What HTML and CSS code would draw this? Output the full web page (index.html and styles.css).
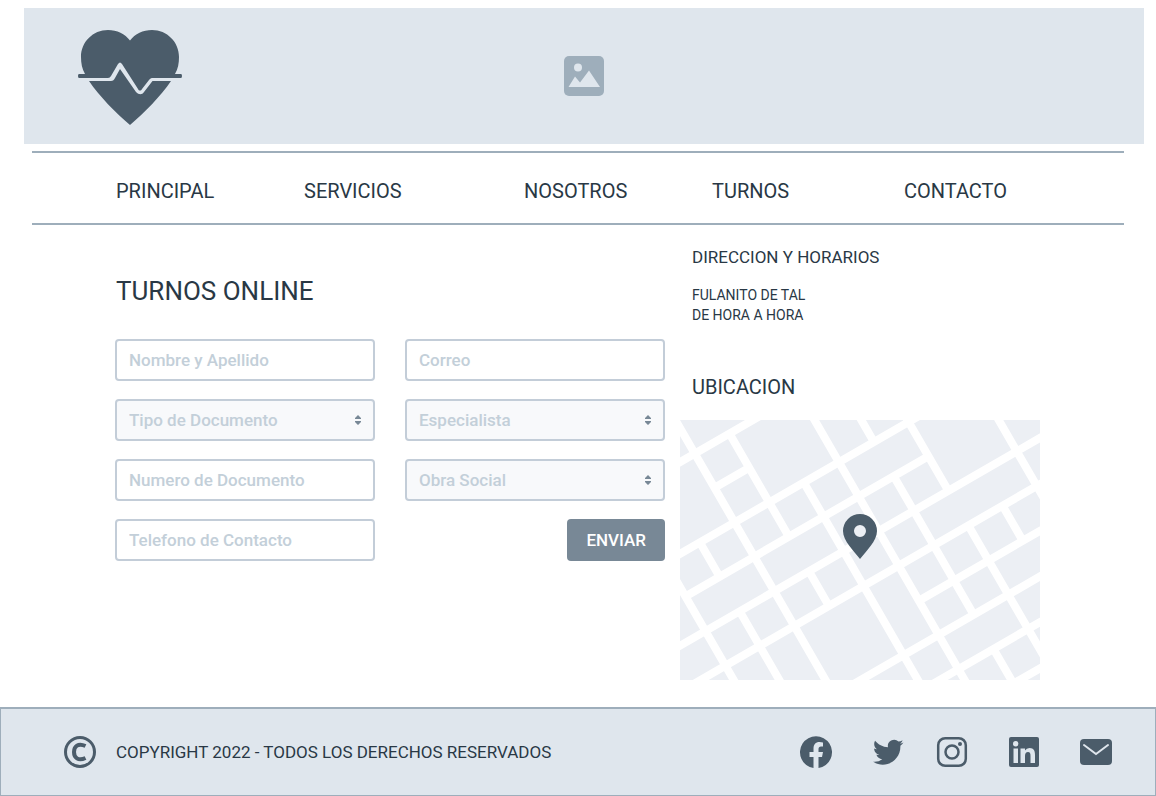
FILE: index.html
```html
<!DOCTYPE html>
<html lang="es">
<head>
<meta charset="utf-8">
<meta name="viewport" content="width=device-width, initial-scale=1">
<title>Turnos Online</title>
<link rel="stylesheet" href="styles.css">
</head>
<body>
<header class="banner">
  <svg class="logo" viewBox="0 0 106 98" aria-hidden="true">
    <path fill="currentColor" d="M53 98C39 86 22 69 12 54H34C36 54 37 53 38 51L43 42L59 65C62 68 65 68 67 65L75.500 54H94C84 69 67 86 53 98Z"/>
    <path fill="currentColor" d="M2 47H8C5 42 4 36 4 30C4 15 16 3 31 3C40 3 48 7 53 13.500C58 7 66 3 75 3C90 3 102 15 102 30C102 36 101 42 98 47H104Q105 47 105 49Q105 51 104 51H75C73.500 51 73 52 72 53L65 62C64 64 62 64 61 62L45 37C43.500 35 42.500 35 41 37L34 49Q33 51 31 51H2Q1 51 1 49Q1 47 2 47Z"/>
  </svg>
  <svg class="picture" viewBox="0 0 40 40" aria-hidden="true">
    <rect width="40" height="40" rx="5" fill="currentColor"/>
    <circle cx="14" cy="11.500" r="4" fill="#dfe6ed"/>
    <path d="M4.500 31L11 20.500L16 26.500L25 14.500L36 31Z" fill="#dfe6ed"/>
  </svg>
</header>
<nav class="menu">
  <a href="#principal">PRINCIPAL</a>
  <a href="#servicios">SERVICIOS</a>
  <a href="#nosotros">NOSOTROS</a>
  <a href="#turnos">TURNOS</a>
  <a href="#contacto">CONTACTO</a>
</nav>
<main class="content">
  <section class="booking">
    <h1>TURNOS ONLINE</h1>
    <form class="form">
      <input class="field" type="text" aria-label="Nombre y Apellido" placeholder="Nombre y Apellido">
      <input class="field" type="email" aria-label="Correo" placeholder="Correo">
      <div class="picker">
        <select class="field" aria-label="Tipo de Documento"><option>Tipo de Documento</option></select>
        <svg class="arrows" viewBox="0 0 6 10" aria-hidden="true"><path d="M0 4V3L3 0L6 3V4ZM0 6V7L3 10L6 7V6Z"/></svg>
      </div>
      <div class="picker">
        <select class="field" aria-label="Especialista"><option>Especialista</option></select>
        <svg class="arrows" viewBox="0 0 6 10" aria-hidden="true"><path d="M0 4V3L3 0L6 3V4ZM0 6V7L3 10L6 7V6Z"/></svg>
      </div>
      <input class="field" type="text" aria-label="Numero de Documento" placeholder="Numero de Documento">
      <div class="picker">
        <select class="field" aria-label="Obra Social"><option>Obra Social</option></select>
        <svg class="arrows" viewBox="0 0 6 10" aria-hidden="true"><path d="M0 4V3L3 0L6 3V4ZM0 6V7L3 10L6 7V6Z"/></svg>
      </div>
      <input class="field" type="tel" aria-label="Telefono de Contacto" placeholder="Telefono de Contacto">
      <button class="send" type="submit">ENVIAR</button>
    </form>
  </section>
  <aside class="info">
    <h2 class="hours-title">DIRECCION Y HORARIOS</h2>
    <p class="hours">FULANITO DE TAL<br>DE HORA A HORA</p>
    <h2 class="place-title">UBICACION</h2>
    <svg class="map" viewBox="0 0 360 260" role="img" aria-label="Mapa">
      <rect width="360" height="260" fill="#eceff4"/>
      <g transform="rotate(-30)" fill="none" stroke="#fff" stroke-width="8">
        <path d="M-140 36.500H340M-140 116H340M-83.500 155.500H197M-140 195.500H340M-140 235.500H340M116.500 276H340M-140 315.500H340M-140 355H340M-140 395H340M-4 76H36"/>
        <path d="M-83.500 0V420M-44 116V155.500M-44 195.500V420M-4 0V420M36 36.500V155.500M36 195.500V235.500M76 116V420M116.500 0V420M157 0V116M157 155.500V315.500M157 355V420M197 0V195.500M197 235.500V420M236.500 235.500V276M276 0V420"/>
      </g>
      <path fill="#4b5c6a" fill-rule="evenodd" d="M180 139C174 131 163 121 163 111A17 17 0 0 1 197 111C197 121 186 131 180 139ZM180 105A6 6 0 1 0 180 117A6 6 0 1 0 180 105Z"/>
    </svg>
  </aside>
</main>
<footer class="footer">
  <svg class="icon" viewBox="0 0 32 32" aria-hidden="true">
    <circle cx="16" cy="16" r="14.500" fill="none" stroke="currentColor" stroke-width="3"/>
    <path d="M21.500 10C14 6.500 10 10.500 10 16S14 25.500 21.500 22" fill="none" stroke="currentColor" stroke-width="4"/>
  </svg>
  <p class="copyright">COPYRIGHT 2022 - TODOS LOS DERECHOS RESERVADOS</p>
  <div class="social">
    <a href="#facebook" aria-label="Facebook"><svg class="icon" viewBox="0 0 32 32"><path fill="currentColor" d="M13.500 32A16 16 0 1 1 18.500 32V21H22L23 16H18.500V13Q18.500 10.500 21 10.500H23V6.500Q21.500 6 19.500 6C15.500 6 13.500 8.500 13.500 12.500V16H9.500V21H13.500Z"/></svg></a>
    <a href="#twitter" aria-label="Twitter"><svg class="icon" viewBox="0 0 24 24"><path fill="currentColor" d="M23.600 4.900c-.8.400-1.700.6-2.700.8 1-.6 1.700-1.500 2-2.600-.9.500-1.900.9-3 1.100A4.700 4.700 0 0 0 12 8.500C8.100 8.300 4.600 6.400 2.300 3.600c-1.300 2.100-.6 4.900 1.400 6.300-.8 0-1.500-.2-2.100-.6 0 2.300 1.600 4.200 3.800 4.700-.7.200-1.400.2-2.100.1.600 1.900 2.300 3.200 4.400 3.300A9.500 9.500 0 0 1 .8 19.300c8.900 5.700 20.500-.4 20.500-11.400v-.6c.9-.6 1.700-1.500 2.300-2.400Z"/></svg></a>
    <a href="#instagram" aria-label="Instagram"><svg class="icon" viewBox="0 0 32 32"><rect x="2.200" y="2.200" width="27.600" height="27.600" rx="7" fill="none" stroke="currentColor" stroke-width="2.500"/><circle cx="16" cy="16" r="6.500" fill="none" stroke="currentColor" stroke-width="2.500"/><circle cx="24" cy="8" r="2" fill="currentColor"/></svg></a>
    <a href="#linkedin" aria-label="LinkedIn"><svg class="icon" viewBox="0 0 32 32"><rect x="1" y="1" width="30" height="30" rx="2" fill="currentColor"/><circle cx="7.700" cy="7.700" r="2.700" fill="#dfe6ed"/><path fill="#dfe6ed" d="M5.500 12.500H10V27H5.500ZM12.500 12.500H17V14.500Q18.500 12 21.500 12C26 12 27 15 27 19V27H22.500V20C22.500 17.500 22 16 20 16S17 17.500 17 20V27H12.500Z"/></svg></a>
    <a href="#correo" aria-label="Correo"><svg class="icon" viewBox="0 0 32 32"><rect y="3" width="32" height="26" rx="4" fill="currentColor"/><path d="M4 9L16 18L28 9" fill="none" stroke="#dfe6ed" stroke-width="2" stroke-linecap="round"/></svg></a>
  </div>
</footer>
</body>
</html>
```
FILE: styles.css
```css
* {
  box-sizing: border-box;
}

body {
  display: flex;
  flex-direction: column;
  min-height: 100vh;
  margin: 0;
  background: #fff;
  color: #293845;
  font-family: Roboto, "Liberation Sans", sans-serif;
}

h1,
h2,
p {
  margin: 0;
  font-weight: 400;
}

svg {
  display: block;
}

.banner {
  display: grid;
  grid-template-columns: 1fr auto 1fr;
  align-items: center;
  margin: 8px 12px 0 24px;
  padding: 19px 54px 19px 53px;
  background: #dfe6ed;
}

.logo {
  width: 106px;
  height: 98px;
  color: #4b5c6a;
}

.picture {
  width: 40px;
  height: 40px;
  color: #9eaebb;
}

.menu {
  display: grid;
  grid-template-columns: 188fr 220fr 188fr 192fr 220fr;
  margin: 7px 32px 0;
  padding: 24px 0 18px 84px;
  border-top: 2px solid #9eaebb;
  border-bottom: 2px solid #9eaebb;
  font-size: 20px;
  line-height: 28px;
}

.menu a {
  justify-self: start;
  color: inherit;
  text-decoration: none;
}

.content {
  display: grid;
  grid-template-columns: 550fr 360fr;
  flex: 1;
  gap: 15px;
  align-items: start;
  padding: 18px 116px 27px 115px;
}

.booking {
  padding-top: 28px;
}

.booking h1 {
  padding-left: 1px;
  font-size: 26px;
  line-height: 40px;
}

.form {
  display: grid;
  grid-template-columns: 1fr 1fr;
  gap: 18px 30px;
  margin-top: 28px;
}

.field {
  width: 100%;
  height: 42px;
  padding: 0 12px;
  border: 2px solid #c3cdd8;
  border-radius: 4px;
  background: #fff;
  color: #c3cfd9;
  font: 500 17px Roboto, "Liberation Sans", sans-serif;
}

.field::placeholder {
  color: #c3cfd9;
  opacity: 1;
}

.picker {
  position: relative;
}

.picker .field {
  appearance: none;
  background: #f8f9fb;
}

.arrows {
  position: absolute;
  top: 16px;
  right: 14px;
  width: 6px;
  height: 10px;
  fill: #788896;
  pointer-events: none;
}

.send {
  justify-self: end;
  height: 42px;
  padding: 0 19px;
  border: 0;
  border-radius: 4px;
  background: #788896;
  color: #fff;
  font: 500 17px Roboto, "Liberation Sans", sans-serif;
}

.hours-title,
.hours,
.place-title {
  padding-left: 12px;
}

.hours-title {
  font-size: 17px;
  line-height: 28px;
}

.hours {
  margin-top: 14px;
  font-size: 14px;
  line-height: 20px;
}

.place-title {
  margin-top: 48px;
  font-size: 20px;
  line-height: 28px;
}

.map {
  width: 100%;
  margin-top: 19px;
}

.footer {
  display: flex;
  align-items: center;
  gap: 20px;
  padding: 27px 43px 27px 63px;
  border: 1px solid #9eaebb;
  border-top-width: 2px;
  background: #dfe6ed;
}

.icon {
  width: 32px;
  height: 32px;
  color: #4b5c6a;
}

.copyright {
  flex: 1;
  font-size: 17px;
  line-height: 32px;
}

.social {
  display: grid;
  grid-template-columns: 72px 64px 72px 72px 32px;
}

.social a {
  justify-self: start;
}
```
